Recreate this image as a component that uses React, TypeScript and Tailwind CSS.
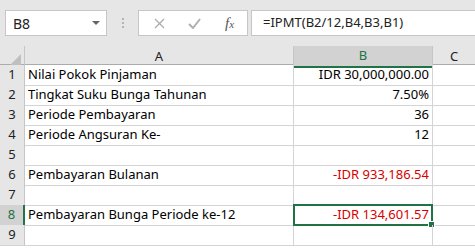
import React from 'react';

const rows = [
  { n: 1, a: 'Nilai Pokok Pinjaman', b: 'IDR 30,000,000.00', red: false },
  { n: 2, a: 'Tingkat Suku Bunga Tahunan', b: '7.50%', red: false },
  { n: 3, a: 'Periode Pembayaran', b: '36', red: false },
  { n: 4, a: 'Periode Angsuran Ke-', b: '12', red: false },
  { n: 5, a: '', b: '', red: false },
  { n: 6, a: 'Pembayaran Bulanan', b: '-IDR 933,186.54', red: true },
  { n: 7, a: '', b: '', red: false },
  { n: 8, a: 'Pembayaran Bunga Periode ke-12', b: '-IDR 134,601.57', red: true },
  { n: 9, a: '', b: '', red: false },
];

const App: React.FC = () => {
  return (
    <div className="w-[475px] h-[249px] overflow-hidden bg-white text-[13px] text-black" style={{ fontFamily: '"Noto Sans", "Open Sans", sans-serif' }}>
      {/* formula bar */}
      <div className="h-[46px] bg-[#e6e6e6] flex items-start pt-[10px] pl-[5px]">
        <div className="w-[102px] h-[26px] bg-white border border-[#c6c6c6] flex items-center justify-between pl-[7px] pr-[6px]">
          <span className="text-[14px] text-[#222]">B8</span>
          <svg width="8" height="5" viewBox="0 0 8 5"><path d="M0 0 L8 0 L4 4 Z" fill="#666" /></svg>
        </div>
        <div className="w-[31px] h-[26px] flex flex-col items-center justify-center gap-[2px]">
          <span className="w-[2px] h-[2px] bg-[#b4b4b4]" />
          <span className="w-[2px] h-[2px] bg-[#b4b4b4]" />
          <span className="w-[2px] h-[2px] bg-[#b4b4b4]" />
        </div>
        <div className="w-[110px] h-[26px] bg-white border border-[#c6c6c6] flex items-center">
          <svg className="ml-[15px]" width="11" height="11" viewBox="0 0 11 11"><path d="M1 1 L10 10 M10 1 L1 10" stroke="#aaa" strokeWidth="1.2" /></svg>
          <svg className="ml-[23px]" width="13" height="11" viewBox="0 0 13 11"><path d="M1 6 L5 10 L12 1" stroke="#b0b0b0" strokeWidth="2" fill="none" /></svg>
          <span className="ml-[24px] text-[15px] italic text-[#555]" style={{ fontFamily: '"Liberation Serif", serif' }}>f<span className="text-[11px]">x</span></span>
        </div>
        <div className="ml-[3px] flex-1 h-[26px] bg-white border border-[#c6c6c6] border-r-0 flex items-center pl-[11px]">
          <span className="text-[13px] text-[#222]">=IPMT(B2/12,B4,B3,B1)</span>
        </div>
      </div>

      {/* column headers */}
      <div className="grid grid-cols-[25px_269px_139px_1fr] h-[19px] bg-[#e6e6e6] border-b border-[#ababab]">
        <div className="border-r border-[#c6c6c6] relative">
          <svg className="absolute right-[3px] bottom-[3px]" width="11" height="11" viewBox="0 0 11 11"><path d="M11 0 L11 11 L0 11 Z" fill="#bfbfbf" /></svg>
        </div>
        <div className="border-r border-[#c6c6c6] flex items-center justify-center text-[13px] text-[#222]">A</div>
        <div className="bg-[#d2d2d2] border-r border-[#c6c6c6] border-b-2 border-b-[#217346] flex items-center justify-center text-[13px] text-[#217346]">B</div>
        <div className="flex items-center justify-center text-[13px] text-[#222]">C</div>
      </div>

      {/* rows */}
      {rows.map(r => {
        const sel = r.n === 8;
        return (
          <div key={r.n} className="grid grid-cols-[25px_269px_139px_1fr] h-[20px]">
            <div className={`flex items-center justify-center text-[13px] border-b ${sel ? 'bg-[#d2d2d2] text-[#217346] border-b-[#c6c6c6] border-r-2 border-r-[#217346]' : 'bg-[#e6e6e6] text-[#222] border-b-[#d4d4d4] border-r border-r-[#c6c6c6]'}`}>{r.n}</div>
            <div className="border-r border-b border-[#d4d4d4] flex items-center pl-[3px] whitespace-nowrap">{r.a}</div>
            <div className={`border-r border-b border-[#d4d4d4] flex items-center justify-end pr-[3px] whitespace-nowrap relative ${r.red ? 'text-[#d80000]' : ''}`}>
              {sel && <div className="absolute -left-[1px] -top-[1px] -right-[1px] -bottom-[1px] border-2 border-[#217346]" />}
              {sel && <div className="absolute -right-[3px] -bottom-[3px] w-[5px] h-[5px] bg-[#217346] border border-white box-content" />}
              <span className="relative">{r.b}</span>
            </div>
            <div className="border-b border-[#d4d4d4]" />
          </div>
        );
      })}
    </div>
  );
};

export default App;
